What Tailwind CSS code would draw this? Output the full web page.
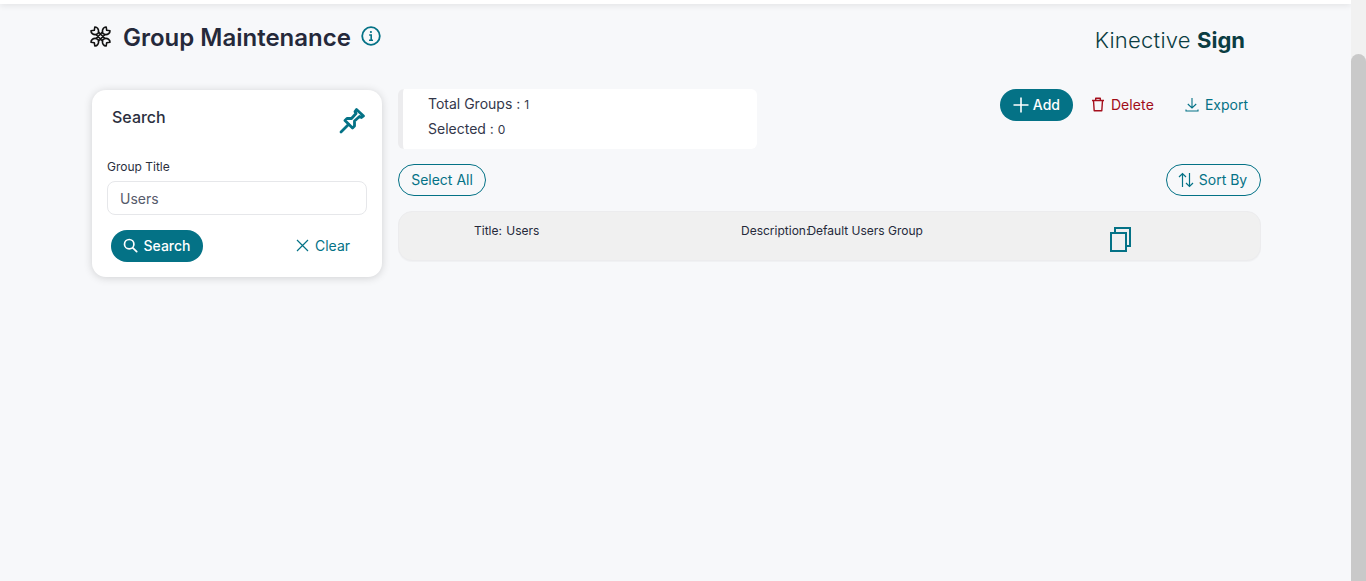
<!DOCTYPE html>
<html lang="en">
<head>
  <meta charset="UTF-8">
  <meta name="viewport" content="width=device-width, initial-scale=1.0">
  <title>Group Maintenance</title>
  <script src="https://cdn.jsdelivr.net/npm/@tailwindcss/browser@4"></script>
</head>
<body class="bg-[#f7f8fa] font-['Inter',sans-serif] overflow-hidden">
  <div class="flex h-[581px]">
    <div class="flex-1 min-w-0">
      <div class="h-1 bg-white shadow-[0_1px_6px_rgba(0,0,0,0.12)]"></div>

      <!-- page header -->
      <div class="flex justify-between pl-[90px] pr-[106px] h-[85px]">
        <div class="flex items-start pt-[19px]">
          <svg class="w-[21px] h-[21px] mt-[3px]" viewBox="0 0 21 21" fill="none" stroke="#111" stroke-width="1.6" stroke-linecap="round" stroke-linejoin="round">
            <path d="M6 8.500 12.500 15M8.500 6 15 12.500M15 8.500 8.500 15M12.500 6 6 12.500"/>
            <path d="M4.800 1 4.300 4.300 1 4.800C.8 7.200 3.500 9 6 8.500 7.500 8 8.800 7 8.500 6 9 3.500 7.200.8 4.800 1Z"/>
            <path transform="matrix(-1 0 0 1 21 0)" d="M4.800 1 4.300 4.300 1 4.800C.8 7.200 3.500 9 6 8.500 7.500 8 8.800 7 8.500 6 9 3.500 7.200.8 4.800 1Z"/>
            <path transform="matrix(1 0 0 -1 0 21)" d="M4.800 1 4.300 4.300 1 4.800C.8 7.200 3.500 9 6 8.500 7.500 8 8.800 7 8.500 6 9 3.500 7.200.8 4.800 1Z"/>
            <path transform="matrix(-1 0 0 -1 21 21)" d="M4.800 1 4.300 4.300 1 4.800C.8 7.200 3.500 9 6 8.500 7.500 8 8.800 7 8.500 6 9 3.500 7.200.8 4.800 1Z"/>
          </svg>
          <h1 class="ml-[12px] text-[24px] leading-[29px] font-semibold text-[#25293a]">Group Maintenance</h1>
          <svg class="ml-[10px] mt-[3px] w-5 h-5" viewBox="0 0 20 20" fill="none" stroke="#047286">
            <circle cx="10" cy="10" r="8.8" stroke-width="1.8"/>
            <path d="M8.2 9h2v5M8 14.2h4" stroke-width="1.6"/>
            <circle cx="9.9" cy="6" r="1.1" fill="#047286" stroke="none"/>
          </svg>
        </div>
        <div class="pt-[20px] text-[22px] leading-[32px] text-[#0b3d42] font-light"><span class="tracking-[0.25px]">Kinective</span> <span class="font-bold">Sign</span></div>
      </div>

      <div class="flex pl-[92px] pr-[90px] gap-[16px] items-start">
        <!-- search panel -->
        <div class="w-[290px] h-[187px] mt-px bg-white rounded-[14px] shadow-[0_1px_8px_rgba(0,0,0,0.16)] shrink-0 px-[15px]">
          <div class="flex justify-between items-start pt-[17px] pl-[5px] pr-[2px]">
            <span class="text-[16px] leading-[20px] font-medium text-[#2b2f3e]">Search</span>
            <svg class="w-[26px] h-[26px] mt-[1px]" viewBox="0 0 26 26" fill="none" stroke="#047286" stroke-width="2.8" stroke-linejoin="round" stroke-linecap="round">
              <path d="M2 24 9.5 16.5"/>
              <path d="M6 12.5 13.5 20 15.5 18 15.5 13 20.5 8.5 22.5 9.5 24.5 8 17.5 1.5 16 3.5 17 5.5 12.5 10.5 8 10.5 6 12.5Z"/>
            </svg>
          </div>
          <div class="mt-[25px] text-[12px] leading-[15px] text-[#2b2f3e]">Group Title</div>
          <input class="mt-[7px] block w-[260px] h-[34px] border border-[#e6e7ea] rounded-[8px] px-3 text-[14px] text-[#565b6b] outline-none" value="Users">
          <div class="flex justify-between items-center mt-[15px] pl-[4px]">
            <button class="h-8 w-[92px] pb-px rounded-full bg-[#047286] text-white text-[14px] font-medium flex items-center justify-center gap-[5px]">
              <svg class="w-[15px] h-[15px]" viewBox="0 0 15 15" fill="none" stroke="#fff" stroke-width="1.7" stroke-linecap="round"><circle cx="6.2" cy="6.2" r="4.7"/><path d="M9.8 9.8 13.7 13.7"/></svg>
              Search
            </button>
            <button class="h-8 w-[71px] pb-px text-[#047286] text-[14px] flex items-center gap-[6px]">
              <svg class="w-[13px] h-[13px]" viewBox="0 0 13 13" fill="none" stroke="#047286" stroke-width="1.2"><path d="M1 1 12 12M12 1 1 12"/></svg>
              Clear
            </button>
          </div>
        </div>

        <!-- results -->
        <div class="flex-1 min-w-0">
          <div class="flex justify-between items-start h-[60px]">
            <div class="w-[359px] h-[60px] bg-white rounded-[6px] border-l-[5px] border-[#ececee] pl-[25px] pt-[2px] text-[14px] leading-[25px] text-[#33374a]">
              <div class="h-[25px]">Total Groups : <span class="text-[12px]">1</span></div>
              <div class="h-[25px]">Selected : <span class="text-[12px]">0</span></div>
            </div>
            <div class="flex items-center pr-[13px]">
              <button class="h-8 w-[73px] pb-px rounded-full bg-[#047286] text-white text-[14px] font-medium flex items-center justify-center gap-[4px]">
                <svg class="w-4 h-4" viewBox="0 0 16 16" fill="none" stroke="#fff" stroke-width="1.6"><path d="M8 .5v15M.5 8h15"/></svg>
                Add
              </button>
              <button class="ml-[18px] h-8 pb-px text-[#a00d18] text-[14px] font-normal tracking-[0.1px] flex items-center gap-[6px]">
                <svg class="w-[14px] h-[15px]" viewBox="0 0 14 15" fill="none" stroke="#a50f1c" stroke-width="1.4" stroke-linejoin="round"><path d="M1 3.5h12M4.7 3.5V1.2h4.6v2.3M2.5 3.5l.7 10.3h7.6l.7-10.3"/></svg>
                Delete
              </button>
              <button class="ml-[31px] h-8 pb-px text-[#047286] text-[14px] flex items-center gap-[6px]">
                <svg class="w-[14px] h-[15px]" viewBox="0 0 14 15" fill="none" stroke="#047286" stroke-width="1.1"><path d="M7 1v10M2.8 7 7 11l4.2-4M1 12.5V14h12v-1.500"/></svg>
                Export
              </button>
            </div>
          </div>

          <div class="flex justify-between items-center mt-[15px]">
            <button class="h-8 w-[88px] pb-px rounded-full border border-[#047286] text-[#047286] text-[14px]">Select All</button>
            <button class="h-8 w-[95px] pb-px pr-[2px] rounded-full border border-[#047286] text-[#047286] text-[14px] flex items-center justify-center gap-[5px]">
              <svg class="w-[16px] h-[16px]" viewBox="0 0 16 16" fill="none" stroke="#047286" stroke-width="1.2"><path d="M4.500 15V1.500M1 5l3.500-3.500L8 5M11.500 1v13.500M8 11l3.500 3.500L15 11"/></svg>
              Sort By
            </button>
          </div>

          <div class="mt-[15px] h-[50px] rounded-[14px] bg-[#f0f0f0] border border-[#ececee] shadow-[0_1px_1px_rgba(0,0,0,0.03)] flex items-start text-[12px] leading-[15px] text-[#25293a]">
            <div class="w-[342px] pl-[75px] pt-[11px] [word-spacing:1px]">Title: Users</div>
            <div class="w-[369px] pt-[11px]">Description:<span class="-ml-[2px]">Default Users Group</span></div>
            <svg class="w-[21px] h-[25px] mt-[15px]" viewBox="0 0 21 25" fill="none" stroke="#047286" stroke-width="2"><path d="M1 6h15v18H1z"/><path d="M5 6V1h15v18h-4"/></svg>
          </div>
        </div>
      </div>
    </div>

    <!-- scrollbar -->
    <div class="w-[15px] shrink-0 bg-[#f1f1f1] pt-[54px]">
      <div class="h-full bg-[#c9c9c9] rounded-t-[8px]"></div>
    </div>
  </div>
</body>
</html>
